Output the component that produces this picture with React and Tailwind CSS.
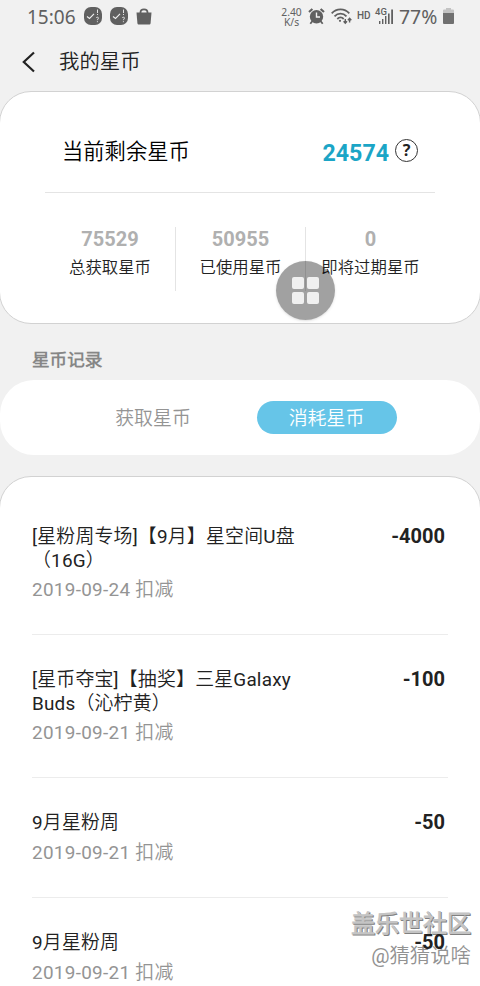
import React from 'react';

const stats = [
    { value: '75529', label: '总获取星币' },
    { value: '50955', label: '已使用星币' },
    { value: '0', label: '即将过期星币' }
];

const records = [
    { id: 1, lines: ['[星粉周专场]【9月】星空间U盘', '（16G）'], date: '2019-09-24 扣减', amount: '-4000' },
    { id: 2, lines: ['[星币夺宝]【抽奖】三星Galaxy', 'Buds（沁柠黄）'], date: '2019-09-21 扣减', amount: '-100' },
    { id: 3, lines: ['9月星粉周'], date: '2019-09-21 扣减', amount: '-50' },
    { id: 4, lines: ['9月星粉周'], date: '2019-09-21 扣减', amount: '-50' }
];

const TaskIcon = () => (
    <svg width="18" height="18" viewBox="0 0 18 18" fill="none">
        <rect width="18" height="18" rx="7" fill="#606060" />
        <path d="M3 9.5L5.5 11.5L10 6.8" stroke="#f1f1f1" strokeWidth="1.1" />
        <path d="M13.5 2.5V6M13.5 7V8M12.3 11C12.6 9.8 14.8 10 14.4 11.3C14.2 12 13.4 12.2 13.4 13.2M13.4 14.2V15.2" stroke="#f1f1f1" strokeWidth="0.9" />
    </svg>
);

const BagIcon = () => (
    <svg width="16" height="17" viewBox="0 0 16 17" fill="none">
        <path d="M0.5 4.5H15.5L14.6 15C14.5 16 14 16.5 13 16.5H3C2 16.5 1.5 16 1.4 15Z" fill="#606060" />
        <path d="M4.5 6V4.5C4.5 0.2 11.5 0.2 11.5 4.5V6" stroke="#606060" strokeWidth="1.8" />
    </svg>
);

const AlarmIcon = () => (
    <svg width="17" height="17" viewBox="0 0 17 17" fill="none">
        <circle cx="8.5" cy="8.7" r="6.7" fill="#606060" />
        <path d="M1 4L4.4 1M16 4L12.6 1" stroke="#606060" strokeWidth="2.2" />
        <path d="M4.5 13L2.3 15.8M12.5 13L14.7 15.8" stroke="#606060" strokeWidth="1.8" />
        <path d="M8.5 4.5V9H12" stroke="#f1f1f1" strokeWidth="1.4" />
    </svg>
);

const WifiIcon = () => (
    <svg width="21" height="17" viewBox="0 0 21 17" fill="none" stroke="#606060">
        <path d="M0.7 5.3C5.5 0 13.5 0 18.3 5.3" strokeWidth="1.8" />
        <path d="M3.5 8.3C7 4.6 12 4.6 15.5 8.3" strokeWidth="1.8" />
        <path d="M6.3 11C8.3 9 10.7 9 12.7 11" strokeWidth="1.8" />
        <circle cx="9" cy="12.8" r="1.1" fill="#606060" stroke="none" />
        <path d="M14.3 11V15M12.6 13.2L14.3 15.2L16 13.2M18.6 14.5V10.5M16.9 12.3L18.6 10.3L20.3 12.3" strokeWidth="1.4" />
    </svg>
);

const SignalIcon = () => (
    <svg width="15" height="15" viewBox="0 0 15 15" fill="#606060">
        <path d="M0 12H1.4V15H0ZM3 10H4.4V15H3ZM6 7H7.4V15H6ZM9 4.5H10.6V15H9ZM12.2 0.5H14V15H12.2Z" />
    </svg>
);

const BatteryIcon = () => (
    <svg width="11" height="16" viewBox="0 0 11 16">
        <path d="M3 0H8V1.5H10Q11 1.5 11 2.5V5H0V2.5Q0 1.5 1 1.5H3Z" fill="#c3c3c3" />
        <path d="M0 5H11V15Q11 16 10 16H1Q0 16 0 15Z" fill="#707070" />
    </svg>
);

const StatusBar = () => (
    <div className="flex h-8 items-center whitespace-nowrap pl-[27px] pr-[26px] text-[#606060]">
        <span className="w-[57px] pt-0.5 font-['Noto_Sans',sans-serif] text-[19px] leading-6">15:06</span>
        <div className="flex items-center gap-[8px]">
            <TaskIcon />
            <TaskIcon />
            <BagIcon />
        </div>
        <div className="ml-auto flex items-center">
            <div className="w-[21px] pt-px text-center font-['Noto_Sans',sans-serif] text-[10.3px] leading-[10px]">
                <div>2.40</div>
                <div>K/s</div>
            </div>
            <div className="ml-[6px]"><AlarmIcon /></div>
            <div className="ml-[6px]"><WifiIcon /></div>
            <span className="ml-[5px] w-[14px] text-[10px] font-medium leading-3">HD</span>
            <div className="relative ml-[8px] -mt-0.5">
                <div className="pt-0.5"><SignalIcon /></div>
                <span className="absolute -left-1 top-0 bg-[#f1f1f1] text-[9.5px] font-medium leading-[9px]">4G</span>
            </div>
            <span className="ml-[5px] w-[41px] pt-0.5 font-['Noto_Sans',sans-serif] text-[19.4px] leading-6">77%</span>
            <div className="ml-[3px]"><BatteryIcon /></div>
        </div>
    </div>
);

const Balance = () => (
    <section className="relative -mx-px h-[233px] rounded-[32px] border border-[#d2d2d2] bg-white px-[45px]">
        <div className="flex h-[101px] items-center whitespace-nowrap border-b border-[#e4e4e4] pl-[17px] pr-[17px] pt-[20px]">
            <span className="text-[21.3px] text-black">当前剩余星币</span>
            <span className="ml-auto pt-[3px] text-[23.2px] font-bold text-[#1ba5c6]">24574</span>
            <span className="mb-[4px] ml-[6px] flex size-[23px] items-center justify-center rounded-full border-[1.5px] border-[#333] font-['Noto_Sans',sans-serif] text-[16px] font-bold text-[#222]">?</span>
        </div>
        <div className="mt-[34px] grid h-16 grid-cols-[131px_130px_129px] whitespace-nowrap text-center">
            {stats.map((stat) => (
                <div key={stat.label} className="border-r border-[#e4e4e4] last:border-r-0">
                    <div className="text-[20px] font-bold leading-6 text-[#b0b0b0]">{stat.value}</div>
                    <div className="mt-[5px] text-[16.4px] leading-6 text-[#222]">{stat.label}</div>
                </div>
            ))}
        </div>
        {/* floating assistant button */}
        <div className="absolute left-[276px] top-[169px] grid size-[59px] grid-cols-[12px_12px] content-center justify-center gap-[3px] rounded-full bg-black/37 shadow-sm">
            {[0, 1, 2, 3].map((i) => (
                <span key={i} className="size-[12px] rounded-[2px] bg-[#f0f0f0]" />
            ))}
        </div>
    </section>
);

const RecordRow = ({ record }) => (
    <div className="flex justify-between border-b border-[#ececec] pb-8 pt-[33px]">
        <div className="whitespace-nowrap text-[18.9px] leading-6 tracking-[0.2px]">
            {record.lines.map((line) => (
                <div key={line} className="text-[#222]">{line}</div>
            ))}
            <div className={record.lines.length > 1 ? 'mt-[5px] tracking-[0.3px] text-[#949494]' : 'mt-1.5 tracking-[0.3px] text-[#949494]'}>{record.date}</div>
        </div>
        <span className="relative z-10 -mt-px pr-[3px] text-[20px] font-bold leading-6 text-[#222]">{record.amount}</span>
    </div>
);

const App = () => {
    return (
        <div className="relative h-[986px] w-[480px] overflow-hidden bg-[#f1f1f1] font-[Roboto,'Noto_Sans_CJK_SC_DemiLight','Noto_Sans_CJK_SC_Light','Noto_Sans_CJK_SC',sans-serif]">
            <StatusBar />
            <header className="flex h-[59px] items-center pl-[22px]">
                <svg width="13" height="22" viewBox="0 0 13 22" fill="none">
                    <path d="M12 1.5L1.8 11L12 20.5" stroke="#222" strokeWidth="2.2" />
                </svg>
                <h1 className="ml-6 pt-0.5 text-[20.4px] text-[#222]">我的星币</h1>
            </header>

            <Balance />

            <h2 className="pl-8 pt-[23px] text-[17.6px] font-bold leading-[26px] text-[#868686]">星币记录</h2>

            <div className="mt-[7px] flex h-[75px] items-center rounded-[34px] bg-white pl-[83px] text-[18.9px]">
                <button className="h-[33px] w-[140px] pt-[3px] text-[#949494]">获取星币</button>
                <button className="ml-[34px] h-[33px] w-[140px] rounded-full bg-[#66c5e8] pr-px pt-[3px] text-white">消耗星币</button>
            </div>

            <section className="-mx-px mt-[21px] h-[540px] rounded-t-[32px] border border-[#d2d2d2] bg-white px-8 pt-[15px]">
                {records.map((record) => (
                    <RecordRow key={record.id} record={record} />
                ))}
            </section>

            {/* community watermark */}
            <div className="absolute right-[9px] top-[907px] whitespace-nowrap text-right">
                <div className="text-[24px] font-bold leading-[34px] text-[#c4c4c4] [text-shadow:1px_1px_0_#808080]">盖乐世社区</div>
                <div className="text-[20.4px] leading-[30px] text-[#929292] [text-shadow:1px_1px_0_#fff]">@猜猜说啥</div>
            </div>
        </div>
    );
};

export default App;
